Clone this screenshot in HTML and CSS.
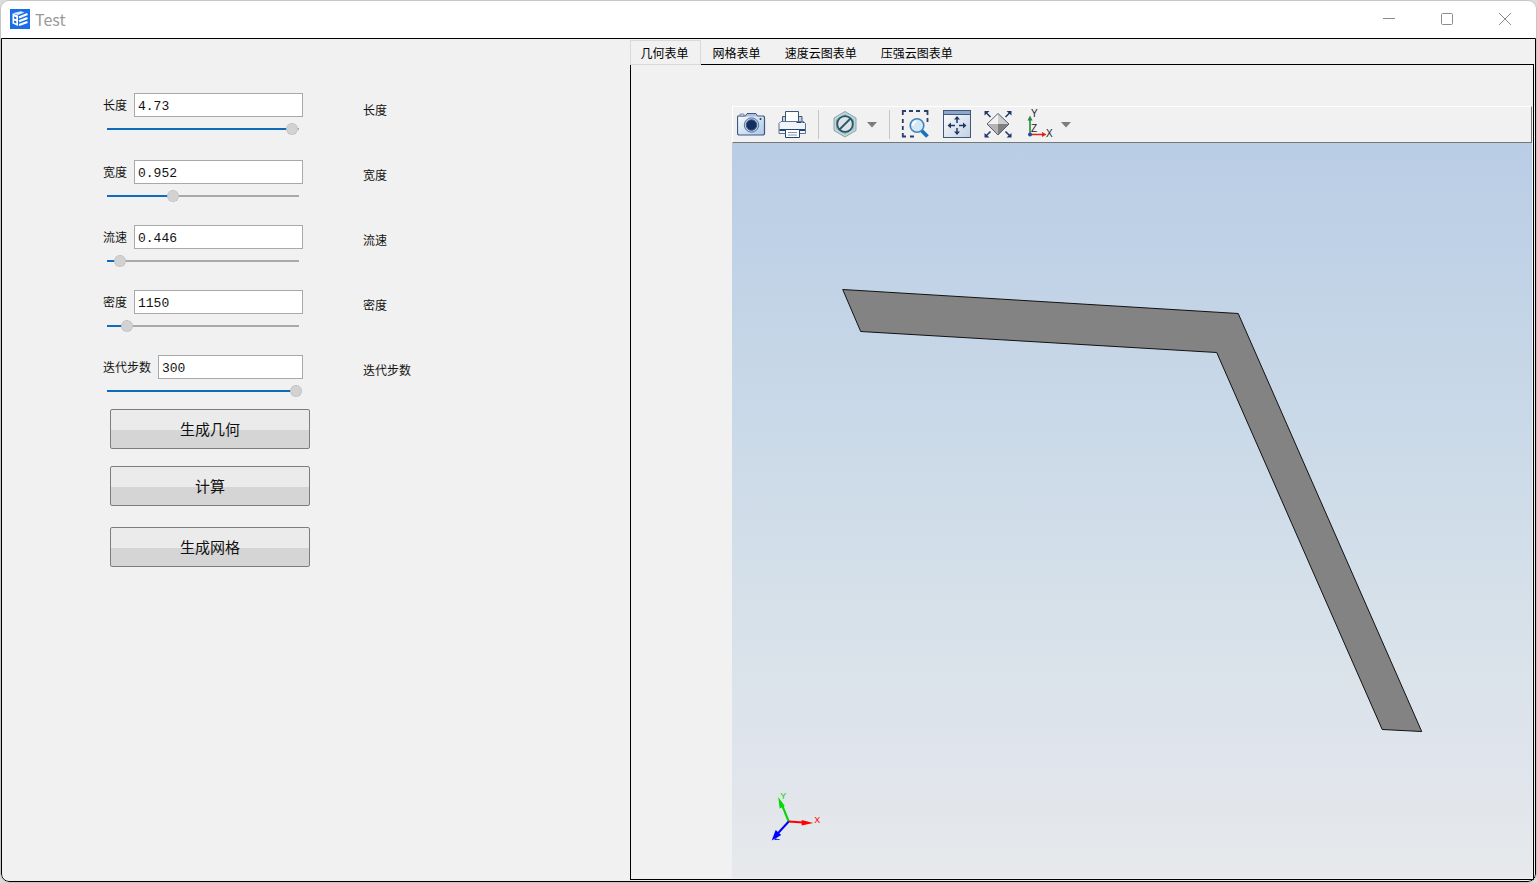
FILE: index.html
```html
<!DOCTYPE html>
<html lang="zh-CN">
<head>
<meta charset="utf-8">
<title>Test</title>
<link rel="stylesheet" href="styles.css">
</head>
<body>
<div class="window">
  <header class="titlebar">
    <svg class="logo" viewBox="0 0 20 20" aria-hidden="true">
      <rect width="20" height="20" fill="#1a6fe8"/>
      <path d="M2.5 4.5 L8 6.5 V17 L2.5 14.5Z M4 7.5 V9.5 L6.300 10.200 V8.300Z M4 11.500 V13.500 L6.300 14.500 V12.300Z" fill="#fff" fill-rule="evenodd"/>
      <path d="M2.500 4.200 L11 2.300 L14.500 3.400 L8 6Z" fill="#dbe9fd"/>
      <path d="M9 8.500 L17.500 5 M9 12.300 L17.500 9 M9 16 L17.500 13" stroke="#fff" stroke-width="2.200" fill="none"/>
    </svg>
    <h1 class="title">Test</h1>
    <div class="controls">
      <button class="control" type="button" aria-label="最小化"><svg viewBox="0 0 12 12"><path d="M0 5.500H12"/></svg></button>
      <button class="control" type="button" aria-label="最大化"><svg viewBox="0 0 12 12"><rect x=".5" y=".5" width="11" height="11" rx="1"/></svg></button>
      <button class="control" type="button" aria-label="关闭"><svg viewBox="0 0 12 12"><path d="M0 0L12 12M12 0L0 12"/></svg></button>
    </div>
  </header>
  <main class="body">
    <section class="form">
      <div class="fields">
        <div class="field first">
          <div class="line"><label for="length">长度</label><input class="box" id="length" type="text" value="4.73"></div>
          <input class="slider" type="range" aria-label="长度" min="0" max="1000" value="978" style="--f:0.978">
        </div>
        <div class="field">
          <div class="line"><label for="width">宽度</label><input class="box" id="width" type="text" value="0.952"></div>
          <input class="slider" type="range" aria-label="宽度" min="0" max="1000" value="328" style="--f:0.328">
        </div>
        <div class="field">
          <div class="line"><label for="speed">流速</label><input class="box" id="speed" type="text" value="0.446"></div>
          <input class="slider" type="range" aria-label="流速" min="0" max="1000" value="38" style="--f:0.038">
        </div>
        <div class="field">
          <div class="line"><label for="density">密度</label><input class="box" id="density" type="text" value="1150"></div>
          <input class="slider" type="range" aria-label="密度" min="0" max="1000" value="76" style="--f:0.076">
        </div>
        <div class="field last">
          <div class="line"><label for="steps">迭代步数</label><input class="box" id="steps" type="text" value="300"></div>
          <input class="slider" type="range" aria-label="迭代步数" min="0" max="1000" value="1000" style="--f:1">
        </div>
        <div class="actions">
          <button class="action" type="button">生成几何</button>
          <button class="action" type="button">计算</button>
          <button class="action spaced" type="button">生成网格</button>
        </div>
      </div>
      <ul class="names">
        <li>长度</li><li>宽度</li><li>流速</li><li>密度</li><li>迭代步数</li>
      </ul>
    </section>
    <section class="views">
      <div class="tabs" role="tablist">
        <button class="tab active" type="button" role="tab" aria-selected="true">几何表单</button>
        <button class="tab" type="button" role="tab">网格表单</button>
        <button class="tab" type="button" role="tab">速度云图表单</button>
        <button class="tab" type="button" role="tab">压强云图表单</button>
      </div>
      <div class="panel" role="tabpanel">
        <div class="viewer">
          <div class="toolbar" role="toolbar">
            <button class="tool" type="button" aria-label="截图">
              <svg viewBox="0 0 29 29">
                <defs><linearGradient id="cam" x1="0" y1="0" x2="1" y2="1"><stop offset="0" stop-color="#fff"/><stop offset="1" stop-color="#a9c8ea"/></linearGradient></defs>
                <path d="M1 6H8.500L10.500 3.500H18.500L20.500 6H26.500L27.500 7V24L26.500 25H1.500L.5 24V7Z" fill="url(#cam)" stroke="#3f5781" stroke-width="1.200"/>
                <path d="M3 4H7V6H3Z" fill="#c9d9ec" stroke="#5f7494" stroke-width=".7"/>
                <path d="M10.500 4H18.500L20 6.500H9Z" fill="#a7c0de"/>
                <circle cx="14.500" cy="15" r="7.200" fill="#b9c8dc" stroke="#5d7699"/>
                <circle cx="14.500" cy="15" r="5.200" fill="#152f5c" stroke="#31558f"/>
                <circle cx="23.500" cy="9" r="1" fill="#1c3766"/>
              </svg>
            </button>
            <button class="tool" type="button" aria-label="打印">
              <svg viewBox="0 0 29 29" stroke="#3f5476">
                <path d="M4.500 12V6.500H24V12" fill="#c3d1e2"/>
                <path d="M7.500 11V1.500H20.500V11" fill="#fff"/>
                <path d="M3 11.500H25.500L27.500 13.500V23.500H1V13.500Z" fill="#f0f3f7" stroke="#5b7093"/>
                <path d="M1.500 20H27" stroke="#26436f" stroke-width="2"/>
                <path d="M18.500 12.500H23.500M24.500 12.500H26" stroke="#26436f"/>
                <path d="M7.500 19.500H21.500V27.500H7.500Z" fill="#fff" stroke="#26436f"/>
                <path d="M10 22.500H19M10 25H19" stroke="#8094ae"/>
              </svg>
            </button>
            <span class="divider"></span>
            <div class="split">
              <button class="tool" type="button" aria-label="剪裁">
                <svg viewBox="0 0 29 29">
                  <path d="M15 1.500L26 8V20.500L15 27L4 20.500V8Z" fill="#c3d5d7" stroke="#86a5aa"/>
                  <path d="M15 4L24 9.500V19L15 24.500L6 19V9.500Z" fill="#9bb8bc"/>
                  <circle cx="15" cy="14" r="7.800" fill="#dfe3e6" stroke="#24586a" stroke-width="1.800"/>
                  <path d="M20.500 8.500L9.500 19.500" stroke="#24586a" stroke-width="1.800"/>
                </svg>
              </button>
              <button class="arrow" type="button" aria-label="更多剪裁"><svg viewBox="0 0 12 7"><path d="M1 1H11L6 6.500Z"/></svg></button>
            </div>
            <span class="divider"></span>
            <button class="tool" type="button" aria-label="框选放大">
              <svg viewBox="0 0 29 29" fill="none">
                <path d="M1.800 5V1H5M8 1H12M15 1H19M23 1H26.500V5M26.500 8V12M1.800 9V13M1.800 16V20M1.800 23V26.500H5M9 26.500H13" stroke="#263f6e" stroke-width="1.800"/>
                <path d="M20.500 20.500L26.500 26.500" stroke="#1674b8" stroke-width="3.800"/>
                <circle cx="16" cy="15.500" r="6.800" fill="#d4e7f6" stroke="#3d83bd" stroke-width="1.600"/>
                <path d="M12 15.500A4 4 0 0 1 15.500 11.500" stroke="#fff" stroke-width="2"/>
              </svg>
            </button>
            <button class="tool" type="button" aria-label="适应窗口">
              <svg viewBox="0 0 29 29">
                <defs><linearGradient id="win" x1="0" y1="0" x2="1" y2="1"><stop offset="0" stop-color="#fff"/><stop offset="1" stop-color="#c3d0e2"/></linearGradient></defs>
                <rect x="1.500" y=".5" width="27" height="27" fill="url(#win)" stroke="#3f5781"/>
                <path d="M2 1H28V4H2Z" fill="#8ba7cc"/><path d="M2 4.500H28" stroke="#3f5781"/>
                <path d="M15 8V13M15 18V23M7.500 15.500H13M17 15.500H22.500" stroke="#1f3868" stroke-width="1.500"/>
                <path d="M15 6L18 9.500H12ZM15 25L18 21.500H12ZM5.500 15.500L9 12.500V18.500ZM24.500 15.500L21 12.500V18.500Z" fill="#1f3868"/>
              </svg>
            </button>
            <button class="tool" type="button" aria-label="全部显示">
              <svg viewBox="0 0 29 29">
                <path d="M15 3.500L26 14H4Z" fill="#f2f2f2"/>
                <path d="M15 3.500L26 14H15Z" fill="#cfcfcf"/>
                <path d="M4 14H15V25Z" fill="#b4b4b4"/>
                <path d="M26 14H15V25Z" fill="#808080"/>
                <path d="M15 3.500L26 14L15 25L4 14Z" fill="none" stroke="#555f70"/>
                <path d="M3 2.500L7.500 7M27 2.500L22.500 7M3 26L7.500 21.500M27 26L22.500 21.500" stroke="#1f3868" stroke-width="1.500"/>
                <path d="M1.500 1H6.500L1.500 5.500ZM28.500 1H23.500L28.500 5.500ZM1.500 27.500H6.500L1.500 23ZM28.500 27.500H23.500L28.500 23Z" fill="#1f3868"/>
              </svg>
            </button>
            <div class="split">
              <button class="tool" type="button" aria-label="视图方向">
                <svg viewBox="0 0 29 29" overflow="visible">
                  <path d="M6 24V9" stroke="#1f8b43" stroke-width="1.600"/><path d="M6 5.500L8.500 10.500H3.500Z" fill="#1f8b43"/>
                  <path d="M6 24.500H20" stroke="#e32219" stroke-width="1.600"/><path d="M22.500 24.500L18 22V27Z" fill="#e32219"/>
                  <circle cx="6" cy="24.500" r="2" fill="#1f4aa8"/>
                  <text class="axis" x="7" y="7">Y</text><text class="axis" x="7" y="22">Z</text><text class="axis" x="22" y="27">X</text>
                </svg>
              </button>
              <button class="arrow" type="button" aria-label="更多视图"><svg viewBox="0 0 12 7"><path d="M1 1H11L6 6.500Z"/></svg></button>
            </div>
          </div>
          <div class="canvas">
            <svg class="scene" viewBox="732 143 800 735">
              <path d="M842.500 289.500L1238 313.500L1421.500 731.500L1382 729.500L1216.500 352.500L860.500 331.500Z" fill="#838383" stroke="#111"/>
              <g stroke-width="2">
                <path d="M788.500 821.500L781 803" stroke="#00d800"/><path d="M778 797L784.500 806L779.500 808.500Z" fill="#00d800"/>
                <path d="M788.500 821.500L803 822.500" stroke="#f00"/><path d="M813 823L801.500 820V825.500Z" fill="#f00"/>
                <path d="M788.500 821.500L778 833" stroke="#00f"/><path d="M771.500 840.500L775.500 830L781 835Z" fill="#00f"/>
              </g>
              <text class="mark" x="780" y="799" fill="#00d800">Y</text>
              <text class="mark" x="814" y="823" fill="#f00">X</text>
              <text class="mark" x="774" y="840" fill="#00f">Z</text>
            </svg>
          </div>
        </div>
      </div>
    </section>
  </main>
</div>
</body>
</html>
```
FILE: styles.css
```css
* { box-sizing: border-box; }

body {
  margin: 0;
  background: #dcdcdc;
  color: #111;
  font: 12px/16px "Noto Sans CJK SC", sans-serif;
}

button, input { margin: 0; padding: 0; font: inherit; color: inherit; }
button { border: 0; background: none; }
svg { display: block; }

.window {
  display: flex;
  flex-direction: column;
  height: 100vh;
  overflow: hidden;
  border: 1px solid #c6c6c6;
  border-radius: 9px;
  background: #fff;
}

.titlebar {
  display: flex;
  flex: none;
  align-items: center;
  height: 37px;
  padding: 0 2px 2px 9px;
}
.logo { width: 20px; height: 20px; }
.title {
  flex: 1;
  margin: 0 0 0 5px;
  color: #999;
  font-size: 16px;
  font-weight: 400;
  line-height: 20px;
}
.controls { display: flex; align-self: stretch; }
.control { display: grid; place-items: center; width: 58px; }
.control svg { width: 12px; height: 12px; fill: none; stroke: #8c8c8c; }

.body {
  display: flex;
  flex: 1;
  min-height: 0;
  border: 1px solid #000;
  border-radius: 0 0 8px 8px;
  background: #f1f1f1;
}

.form { display: flex; flex: 628; }
.fields { width: 200px; margin: 54px 0 0 101px; }
.field { height: 65px; }
.field.first { height: 67px; }
.field.last { height: 54px; }
.line { display: flex; align-items: center; gap: 7px; }
.box {
  flex: 1;
  min-width: 0;
  height: 24px;
  padding: 2px 3px 0;
  border: 1px solid #a9a9a9;
  border-radius: 0;
  background: #fff;
  font: 13px/20px "Liberation Mono", monospace;
}

.slider {
  display: block;
  width: 195px;
  height: 12px;
  margin: 6px 0 0 4px;
  appearance: none;
  background: none;
}
.slider::-webkit-slider-runnable-track {
  --stop: calc(6px + (100% - 12px) * var(--f));
  height: 2px;
  background: linear-gradient(to right, #0f6cbd 0 var(--stop), #a9a9a9 var(--stop) calc(100% - 3px), transparent calc(100% - 3px));
}
.slider::-webkit-slider-thumb {
  width: 12px;
  height: 12px;
  margin-top: -5px;
  appearance: none;
  border: 1px dotted #b4b4b4;
  border-radius: 50%;
  background: #d2d2d2;
}

.actions { display: flex; flex-direction: column; gap: 17px; margin-left: 7px; }
.action {
  width: 200px;
  height: 40px;
  border: 1px solid #7d7d7d;
  border-radius: 2px;
  background: linear-gradient(#ebebeb 0 53%, #d5d5d5 53%);
  font-size: 15px;
}
.action.spaced { margin-top: 4px; }

.names {
  margin: 63px 0 0 60px;
  padding: 0;
  list-style: none;
}
.names li { height: 65px; }

.views { display: flex; flex: 905; flex-direction: column; min-width: 0; padding: 1px 1px 1px 0; }
.tabs { display: flex; }
.tab { height: 25px; padding: 0 12px; color: #000; }
.tab.active {
  z-index: 1;
  padding: 0 11px 0 10px;
  border: 1px solid #d9d9d9;
  background: #f1f1f1;
}
.panel {
  display: flex;
  flex: 1;
  min-height: 0;
  margin-top: -1px;
  padding: 41px 1px 1px 101px;
  border: 1px solid #000;
}

.viewer { display: flex; flex: 1; flex-direction: column; min-width: 0; }
.toolbar {
  display: flex;
  flex: none;
  align-items: center;
  gap: 12px;
  height: 37px;
  padding-left: 4px;
  border: 1px solid;
  border-color: #fff #777 #777 #fff;
}
.tool, .tool svg { width: 29px; height: 29px; }
.split { display: flex; align-items: center; gap: 7px; }
.arrow svg { width: 12px; height: 7px; fill: #7c7c7c; }
.divider { width: 1px; height: 29px; margin: 0 -1px; background: #c6c6c6; }
.axis { font: 10px "Liberation Sans", sans-serif; fill: #222; }

.canvas {
  flex: 1;
  min-height: 0;
  background: linear-gradient(#b9cde5 0, #cad9e8 38%, #dae3ea 72%, #e0e4ed 85%, #e2e6ea 90%, #e7e9ec 100%);
}
.scene { width: 100%; height: 100%; }
.mark { font: 9px "Liberation Sans", sans-serif; }
```
